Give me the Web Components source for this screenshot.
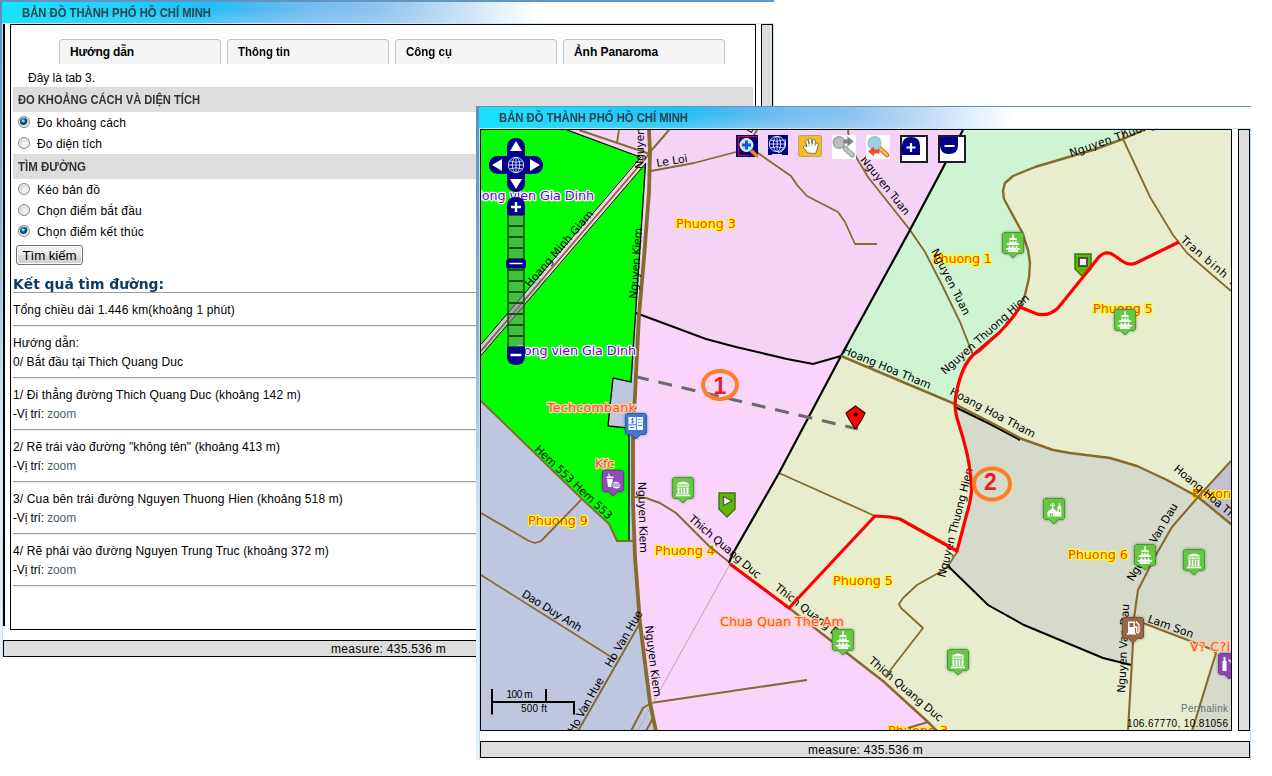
<!DOCTYPE html>
<html lang="vi">
<head>
<meta charset="utf-8">
<title>Bản đồ thành phố Hồ Chí Minh</title>
<style>
body{margin:0;background:#fff;font:12px/19px "Liberation Sans",Arial,sans-serif;color:#000}
</style>
</head>
<body>
<map-desktop></map-desktop>

<script>
function define(name, html, ready) {
  customElements.define(name, class extends HTMLElement {
    connectedCallback() {
      if (this.shadowRoot) return;
      const t = document.createElement('template');
      t.innerHTML = typeof html === 'function' ? html(this) : html;
      this.attachShadow({ mode: 'open' }).appendChild(t.content.cloneNode(true));
      if (ready) ready(this);
    }
  });
}

/* A single line of text fitted to an exact width (w, in px): small
   differences are tracked, larger ones condense the glyphs. */
define('fit-line', '<style>:host{display:inline-block;white-space:nowrap}span{display:inline-block;transform-origin:0 50%}</style><span><slot></slot></span>', el => {
  const w = +el.getAttribute('w'), span = el.shadowRoot.querySelector('span');
  const natural = span.getBoundingClientRect().width;
  if (natural > w * 1.035) {
    span.style.transform = `scaleX(${w / natural})`;
    el.style.width = w + 'px';
  } else span.style.letterSpacing = (w - natural) / el.textContent.length + 'px';
});

/* Browser window: title bar, content panel, side bar and status bar. */
define('app-window', `<style>
:host{display:block;position:relative;box-sizing:border-box;background:#fff}
.win{display:grid;grid-template-columns:var(--edge) 1fr 1px;grid-template-rows:var(--top) var(--head) 1px 1fr;height:100%}
.top{grid-column:1/4;background:#6396bf}
.left{grid-row:2/5;background:linear-gradient(#5b8fba,#8fb2cf 35%,#dce8ef 65%,#eee)}
.head{grid-column:2/4;background:
 radial-gradient(ellipse 260px 16px at 250px 24px,#ffffff40,#ffffff00) 0 0/533px 100% no-repeat,
 linear-gradient(100deg,#19e2fc,#22d2fa 18%,#1fc0f6 38%,#4bb9f1 47%,#6fbcef 56%,#8fc4ef 70%,#b9d9f5 82%,#e9f3fc 94%,#fff) 0 0/533px 100% no-repeat;
 display:flex;align-items:center;padding-left:20px;font-weight:bold;color:#29424d}
::slotted([slot=title]){margin-top:1px}
.seam{grid-column:2/4;background:#c9e6f3}
.main{grid-column:2;border-left:1px solid #b7e5fa;display:flex;flex-direction:column}
.rim{background:#b7dff3}
.row{display:flex;gap:var(--gap);height:var(--h)}
.edgebar{width:2px;margin-right:var(--lead);background:#000;height:calc(100% - 4px)}
:host([plain]) .edgebar{display:none}
.panel{box-sizing:border-box;width:var(--pw);border:1px solid #000;overflow:hidden}
.side{box-sizing:border-box;width:12px;border:1px solid #000;background:#ddd}
.status{box-sizing:border-box;margin-top:10px;height:17px;border:1px solid #000;background:#ddd;text-align:center;line-height:16px;padding-left:1px}
.wrap{display:flex}
</style>
<div class="win"><div class="top"></div><div class="left"></div>
<div class="head"><slot name="title"></slot></div><div class="seam"></div>
<div class="main"><div class="row"><div class="wrap"><div class="edgebar"></div><div class="panel"><slot></slot></div></div><div class="side"></div></div>
<div class="status"><slot name="status"></slot></div></div><div class="rim"></div></div>`);

define('tab-strip', `<style>:host{display:flex;gap:6px;padding:14px 0 0 46px}
::slotted(*){box-sizing:border-box;width:162px;height:25px;border:1px solid #c3c3c3;border-bottom:0;border-radius:4px 4px 0 0;background:#f5f5f5;padding-left:10px;font-weight:bold;line-height:24px}</style><slot></slot>`);

define('section-bar', `<style>:host{display:block;box-sizing:border-box;height:25px;line-height:25px;background:#ddd;padding:1px 0 0 5px;font-weight:bold;color:#333}</style><slot></slot>`);

define('radio-row', `<style>:host{display:flex;height:21px;line-height:23px;padding-left:5px}
i{box-sizing:border-box;width:12px;height:12px;margin:4px 7px 0 0;border:1px solid #85898c;border-radius:50%;background:radial-gradient(circle at 60% 60%,#f4f4f4 20%,#c9ccce 75%);box-shadow:inset 0 0 0 1px #f4f4f4}
:host([on]) i{background:radial-gradient(circle at 42% 38%,#9adcf4 0 8%,#1b6f9f 22%,#0b3350 42%,#cfd6da 54%,#e8e8e8 70%)}</style><i></i><slot></slot>`);

define('push-button', `<style>:host{box-sizing:border-box;display:flex;justify-content:center;width:67px;height:20px;margin:3px 0 9px 3px;border:1px solid #707070;border-radius:3px;background:linear-gradient(#f2f2f2,#ebebeb 50%,#ddd 50%,#cfcfcf);box-shadow:inset 0 0 0 1px #fcfcfc;font-size:13.3px;line-height:19px}</style><slot></slot>`);

define('route-step', `<style>:host{display:block;padding:7px 0 6px;border-bottom:1px solid #ececec;box-shadow:inset 0 -1px #9a9a9a}
::slotted(div){height:19px}</style><slot></slot>`);

define('guide-panel', `<style>
:host{display:block;padding:0 2px}
.note{height:23px;line-height:28px;padding-left:15px}
h3{margin:0;height:18px;border-bottom:1px solid #9a9a9a;font:bold 14.5px/20px "DejaVu Sans",Verdana,sans-serif;color:#0b3b68}
.first{padding-top:8px}
a{color:#4d6470}
</style>
<tab-strip><div><fit-line w="64">Hướng dẫn</fit-line></div><div><fit-line w="52">Thông tin</fit-line></div><div><fit-line w="46">Công cụ</fit-line></div><div><fit-line w="84">Ảnh Panaroma</fit-line></div></tab-strip>
<div class="note"><fit-line w="67">Đây là tab 3.</fit-line></div>
<section-bar><fit-line w="182">ĐO KHOẢNG CÁCH VÀ DIỆN TÍCH</fit-line></section-bar>
<radio-row on><fit-line w="89">Đo khoảng cách</fit-line></radio-row>
<radio-row><fit-line w="65">Đo diện tích</fit-line></radio-row>
<section-bar><fit-line w="68">TÌM ĐƯỜNG</fit-line></section-bar>
<radio-row><fit-line w="63">Kéo bản đồ</fit-line></radio-row>
<radio-row><fit-line w="105">Chọn điểm bắt đầu</fit-line></radio-row>
<radio-row on><fit-line w="107">Chọn điểm kết thúc</fit-line></radio-row>
<push-button><fit-line w="54">Tìm kiếm</fit-line></push-button>
<h3><fit-line w="151">Kết quả tìm đường:</fit-line></h3>
<div><route-step class="first"><div><fit-line w="222">Tổng chiều dài 1.446 km(khoảng 1 phút)</fit-line></div></route-step>
<route-step><div><fit-line w="66">Hướng dẫn:</fit-line></div><div><fit-line w="170">0/ Bắt đầu tại Thich Quang Duc</fit-line></div></route-step>
<route-step><div><fit-line w="288">1/ Đi thẳng đường Thich Quang Duc (khoảng 142 m)</fit-line></div><div><fit-line w="63">-Vị trí: <a>zoom</a></fit-line></div></route-step>
<route-step><div><fit-line w="267">2/ Rẽ trái vào đường "không tên" (khoảng 413 m)</fit-line></div><div><fit-line w="63">-Vị trí: <a>zoom</a></fit-line></div></route-step>
<route-step><div><fit-line w="330">3/ Cua bên trái đường Nguyen Thuong Hien (khoảng 518 m)</fit-line></div><div><fit-line w="63">-Vị trí: <a>zoom</a></fit-line></div></route-step>
<route-step><div><fit-line w="316">4/ Rẽ phải vào đường Nguyen Trung Truc (khoảng 372 m)</fit-line></div><div><fit-line w="63">-Vị trí: <a>zoom</a></fit-line></div></route-step></div>`);

/* ---- map drawing ---- */
const street = (s, x1, y1, x2, y2) => {
  const l = Math.hypot(x2 - x1, y2 - y1), a = Math.atan2(y2 - y1, x2 - x1) * 180 / Math.PI;
  return `<text class="st" textLength="${l.toFixed(1)}" transform="translate(${x1} ${y1}) rotate(${a.toFixed(2)})">${s}</text>`;
};
const place = (s, x, y, w, c) => `<text class="pl ${c || 'ward'}" x="${x}" y="${y}" textLength="${w}">${s}</text>`;
const road = (w, p) => `<polyline class="rd" stroke-width="${w}" points="${p}"/>`;
const area = (c, p) => `<polygon fill="${c}" points="${p}"/>`;
const glyphs = {
  pagoda: '<path d="M11 2v3" stroke="#fff" stroke-width="1.300"/><path d="M11 4Q11.500 6 15 6.500L14.500 8H7.500L7 6.500Q10.500 6 11 4ZM7.500 8.800h1.300v1.700h1.500V8.800h1.400v1.700h1.500V8.800h1.300v1.700Q15 11.500 17.500 11.500L16.500 13H5.500L4.500 11.500Q7 11.500 7.500 10.500ZM6.800 13.800h1.400v1.600h2V13.800h1.600v1.600h2V13.800h1.400v1.500Q16 16.300 18.500 16.300L17.500 17.800H4.500L3.500 16.300Q6 16.300 6.800 15.300ZM6 18.200h3v-.2h4v.2h3v1.800H6Z" fill="#fff"/>',
  museum: '<path d="M4 7.500Q11 1.500 18 7.500ZM5 8.500h12v1.300H5ZM5.500 10.500h2v6.500h-2ZM8.700 10.500h1.700v6.500H8.700ZM11.600 10.500h1.700v6.500h-1.700ZM14.500 10.500h2v6.500h-2ZM4 17.500h14v1.700H4Z" fill="#fff"/>',
  church: '<path d="M9 5h1.200v1.700h1.600v1.200h-1.600v2.300L14.500 14V9.500l.8-1.500L16.500 4l1 4 .8 1.500V18.500H4.500V14L9 10.200V7.900H7.400V6.700H9Z" fill="#fff"/><path d="M7.500 18.500v-3h1.800v3M16.500 11v3" stroke="#68c344" fill="none"/>',
  bank: '<path d="M3.500 4H18V17H3.500Z" fill="#fff"/><path d="M11.300 4v13M13 6.500h1.600M15.600 6.500h1.400M13 9.500h1.600M15.600 9.500h1.400M13 12.500h4M3.500 11.800h8M5 14.500h4.500" stroke="#3d79d4"/><path d="M9 5.700H7Q5.500 6.700 7.500 7.700Q9.500 8.500 8.500 9.500H6M7.600 4.700v6" fill="none" stroke="#3d79d4" stroke-width=".9"/>',
  food: '<path d="M4.500 6.500h7v1.500h-7ZM5 8.800h5.800L10.500 12.500Q8.700 14 9.500 17H6ZM6.800 6.500L6 3.500l1-.3 1 3.300ZM10.500 13.500q3.500-3.500 7.500 0ZM10 14.500h8.500v1H10ZM10.500 16.500h8q-1 2-4 2t-4-2Z" fill="#fff"/>',
  fuel: '<path d="M6 4.500h7V16h1v1.500H5V16h1ZM7.500 6V10h4V6Z" fill="#fff" fill-rule="evenodd"/><path d="M13 10h1.700v5q1.500 2 2.300-.5V8l-3-3.500" fill="none" stroke="#fff" stroke-width="1.300"/>',
  bar: '<path d="M4.500 8h4v10h-4ZM5.500 4h2v4h-2ZM11 6l5 5v7h-1v-6l-5-5Z" fill="#fff"/>'
};
/* Square pin whose badge centre is (cx, cy). */
const pin = (g, cx, cy, c = '#67c646', d = '#469b32') => `<g class="pin" transform="translate(${cx - 11} ${cy - 11})"><path d="M2 .5H20L21.500 2V20L20 21.500H15.500L11 26L6.500 21.500H2L.5 20V2Z" fill="${c}" stroke="${d}"/>${glyphs[g]}</g>`;
const globe = (x, y) => `<g transform="translate(${x} ${y})" fill="none" stroke="#dce6ff" stroke-width=".9"><circle r="7.700"/><ellipse rx="3.700" ry="7.700"/><path d="M0-7.700V7.700M-7.700 0H7.700M-6.500-4Q0-1.500 6.500-4M-6.500 4Q0 1.500 6.500 4"/></g>`;

const hienNorth = '1144,130 1123,139 1093,150 1062,159 1035,167 1013,176 1005,183 1003,191 1004,199 1022,232 1028,250 1030,263 1029,278 1025,295 1020,307';
const hienMid = '1020,307 1012,319 1000,332 980,351 973,355 965,365 961,375 957,390 955,406';
const tham = '955,404 990,422 1022,439 1053,450 1070,453 1110,458 1137,466 1167,480 1198,497 1232,525';
const duc = '729,563 789,608 870,671 883,681 928,722 937,731';
const kiem = '649,129 650,153 649,192 644,258 639,315 636,375 633,437 633,503 635,557 640,623 650,703 656,731';
const wardLine = '963,130 910,230 841,356 779,473 732,555 729,563';

define('map-view', `<style>
:host{display:block;width:750px;height:600px}
svg{display:block}
.rd{fill:none;stroke:#876a2d;stroke-linejoin:round}
.bk{fill:none;stroke:#000}
.st{font:11px "DejaVu Sans",sans-serif;fill:#000}
.pl{font:12.800px "DejaVu Sans",sans-serif;paint-order:stroke;stroke-width:2.500px;stroke-linejoin:round}
.ward{fill:#ff3d30;stroke:#ff0}
.poi{fill:#ff4a40;stroke:#fdd5a0}
.park{fill:#6a00d8;stroke:#fff}
.pin{filter:drop-shadow(0 0 1.500px #0006)}
.sm{font:10px "Liberation Sans",Arial,sans-serif}
.num{font:bold 23px "Liberation Sans",Arial,sans-serif;fill:#ed1c24}
</style>
<svg width="750" height="600" viewBox="481 130 750 600">
<defs><clipPath id="hm"><path d="M481 130H700V278H481Z"/></clipPath></defs>
${area('#fad4fb', '481,130 1231,130 1231,730 481,730')}
${area('#f5d3f6', '481,130 963,130 841,356 813,364 787,359 736,347 706,339 637,314 481,314')}
${area('#bfc6df', '481,314 639,314 636,375 633,437 633,503 635,557 640,623 650,703 656,730 481,730')}
${area('#e8eecd', '963,130 1231,130 1231,730 937,730 870,671 789,608 729,563 732,555 841,356')}
${area('#cff4d2', '963,130 ' + hienNorth + ' 1000,332 980,351 973,355 965,365 957,390 955,404 841,356')}
${area('#d6dacb', '955,406 ' + tham + ' 1231,730 1192,730 1216,653 1211,649 1143,623 1133,643 1131,665 1103,658 1024,625 987,604 948,566 957,552 967,513 971,493 970,470 963,438 957,418')}
${area('#c3c1cd', '1198,497 1231,461 1231,524')}
${area('#0f0', '481,130 567,130 640,157 646,163 642,225 635,314 631,382 613,378 608,426 629,428 629,540 617,541 609,524 582,499 481,401')}
<path class="bk" stroke-width="1.300" d="M567 130L640 157M645.500 163L641.500 225L635.500 314L631 382L613 378L608 426L629 428V540"/>
<path d="M642 155L481 344V356L646 163Z" fill="#c5cbd8"/><path clip-path="url(#hm)" d="M642 155L481 344V356L646 163Z" fill="#f3d3ec"/>
<path class="bk" stroke-width="1" d="M641 157L481 344.500M481 355.500L646 163"/>
${place('Phuong 3', 676, 228, 60)}${place('Phuong 1', 933, 263, 59)}${place('Phuong 5', 1093, 313, 60)}${place('Phuong 9', 528, 525, 60)}
${place('Phuong 4', 655, 555, 60)}${place('Phuong 5', 833, 585, 60)}${place('Phuong 6', 1068, 559, 60)}${place('Phuong', 1192, 498, 47)}${place('Phuong 3', 888, 735, 60)}
${road(1.8, '481,351 650,153')}
${road(2, '579,130 650,154')}${road(1.8, '619,130 617,143')}${road(2, '669,130 650,152')}
${road(1.8, '651,171 694,163 736,152 745,147 749,147 758,153 791,176 797,185 807,196 838,212 845,222 855,244 877,244')}${road(2, '757,130 747,147')}
${road(1.9, '848,130 849,140 856,157 868,177 910,230 925,252 943,287 960,322 973,355')}
${road(2, '481,401 582,499 609,524 617,541 633,541')}
${road(1.8, '481,513 529,541 535,543 541,541 582,499')}
${road(1.8, '481,575 616,660')}${road(2, '640,623 578,731')}
${road(2, '631,731 643,708 651,703 807,680')}${road(2, '646,731 653,718')}
<path d="M729 566L638 730" stroke="#c3a3ae" fill="none"/>
${road(2, '635,497 646,498 660,503 676,513 709,546 729,562')}
${road(1.8, '779,473 875,516')}
<polyline class="bk" stroke-width="2.200" points="${wardLine}"/>
<path class="bk" stroke-width="2" d="M636 313L706 339L736 347L787 359L813 364L841 356M955 407L990 424L1020 440M948 566L988 605L1024 625L1103 658L1131 665"/>
${road(2.5, '841,356 955,404')}${road(2.4, tham)}${road(2.4, hienNorth)}${road(2.4, hienMid)}${road(2.5, duc)}
${road(1.8, '957,552 948,566 940,572 917,585 903,598 899,604 901,608 923,628 885,677')}${road(2, '908,728 928,722')}
${road(1.8, '1125,130 1123,139 1150,197 1173,235 1187,253 1210,273 1231,291')}
${road(2.1, '1231,461 1198,497 1172,527 1157,553 1138,590 1134,618 1133,643 1128,731')}
${road(2.1, '1132,619 1143,623 1211,649')}${road(2.1, '1211,649 1216,653 1192,731')}
${road(3.8, kiem)}
${street('Nguyen Kiem', 643, 169, 645, 98)}${street('Nguyen Kiem', 637, 299, 642, 228)}
${street('Nguyen Kiem', 638, 482, 640, 553)}${street('Nguyen Kiem', 645, 626, 654, 697)}
${street('Le Loi', 657, 167, 688, 162)}${street('Le Loi', 751, 134, 767, 106)}${street('Hoang Minh Giam', 530, 288, 594, 214)}
${street('Hem 553 Hem 553', 534, 450, 608, 520)}${street('Dao Duy Anh', 521, 596, 579, 632)}
${street('Ho Van Hue', 611, 668, 643, 613)}${street('Ho Van Hue', 574, 734, 604, 680)}
${street('Thich Quang Duc', 688, 520, 757, 579)}${street('Thich Quang Duc', 774, 589, 846, 645)}${street('Thich Quang Duc', 868, 662, 939, 722)}
${street('Nguyen Tuan', 860, 160, 905, 216)}${street('Nguyen Tuan', 931, 251, 964, 316)}
${street('Hoang Hoa Tham', 842, 353, 929, 389)}${street('Hoang Hoa Tham', 949, 394, 1033, 438)}${street('Hoang Hoa Tham', 1173, 470, 1245, 530)}
${street('Nguyen Thuong Hien', 945, 375, 1030, 299)}${street('Nguyen Thuong Hien', 1071, 157, 1185, 117)}${street('Nguyen Thuong Hien', 945, 578, 973, 469)}
${street('Tran binh Trong', 1180, 241, 1253, 304)}
${street('Nguyen Van Dau', 1133, 582, 1178, 506)}${street('Nguyen Van Dau', 1125, 693, 1129, 604)}${street('Lam Son', 1147, 622, 1192, 638)}
${place('Cong vien Gia Dinh', 473, 200, 121, 'park')}${place('Cong vien Gia Dinh', 515, 355, 121, 'park')}
${place('Techcombank', 547, 412, 89, 'poi')}${place('Kfc', 595, 468, 19, 'poi')}${place('Chua Quan The Am', 720, 626, 124, 'poi')}${place('V? C?i', 1190, 651, 40, 'poi')}
${pin('pagoda', 1013, 243)}${pin('pagoda', 1125, 320)}${pin('pagoda', 843, 640)}${pin('pagoda', 1145, 555)}
${pin('museum', 683, 488)}${pin('museum', 1194, 560)}${pin('museum', 958, 660)}${pin('church', 1054, 509)}
${pin('bank', 636, 424, '#3d79d4', '#2a5dac')}${pin('food', 613, 481, '#8b4fb8', '#70389c')}${pin('fuel', 1133, 628, '#9b6647', '#7b4d33')}${pin('bar', 1229, 664, '#8b45b5', '#70389c')}
<path d="M1075 254H1091V269L1083 277L1075 269Z" fill="#62b800" stroke="#387519" stroke-width="1.500"/><rect x="1079" y="258" width="8" height="8" fill="#f4eef4" stroke="#444" stroke-width="1.800"/>
<path d="M719 493H735V509L727 517L719 509Z" fill="#62b800" stroke="#387519" stroke-width="1.500"/><path d="M723.500 496.500L732 501L723.500 505.500Z" fill="#f6f6f6" stroke="#555" stroke-width="1.300"/>
<path d="M635 376.500L858 429" stroke="#6b6b6b" stroke-width="3" stroke-dasharray="14 10" fill="none"/>
<path d="M855.500 406L865 413L861.500 420L856 428.500H855L849.500 420L846 413Z" fill="red" stroke="#300" stroke-width="1.200"/><circle cx="855.500" cy="414.500" r="2" fill="#200"/>
<path d="M730 564L789 608L875 516L890 517L900 519L957 551L967 513Q971 500 971.500 490Q971 465 963 438L957 418Q953 404 957 390Q962 366 973 355L1000 332Q1013 318 1020 307L1032 312Q1046 319 1058 308L1083 277L1098 258Q1106 249 1115 256L1122 261Q1129 266 1136 263L1179 242" fill="none" stroke="red" stroke-width="3.200" stroke-linejoin="round"/>
<ellipse cx="720" cy="385" rx="17" ry="14" fill="none" stroke="#ff7f27" stroke-width="4"/><text class="num" x="713.500" y="394">1</text>
<ellipse cx="992" cy="484" rx="18" ry="15.500" fill="none" stroke="#ff7f27" stroke-width="4"/><text class="num" x="984" y="490">2</text>
<g fill="#00008b"><rect x="507" y="138" width="18" height="54" rx="8.500"/><rect x="489" y="156" width="54" height="18" rx="8.500"/></g>
<path d="M516 141L522 151H510ZM516 189L522 179H510ZM492 165L502 159V171ZM540 165L530 159V171Z" fill="#fff"/>${globe(516, 165)}
<rect x="508" y="215" width="16" height="132" fill="#7f7f7f" fill-opacity=".5" stroke="#064d06" stroke-width="1.500"/>
<path d="M508 226h16m-16 11h16m-16 11h16m-16 11h16m-16 11h16m-16 11h16m-16 11h16m-16 11h16m-16 11h16m-16 11h16m-16 11h16" stroke="#0a5a0a" stroke-width="1.800"/>
<path d="M507 215V206Q507 197 516 197T525 206V215ZM507 347V356Q507 365 516 365T525 356V347Z" fill="#00008b"/><rect x="506" y="259" width="20" height="9.500" rx="3" fill="#00008b"/>
<path d="M511 207h10M516 202v10M510.500 355h11" stroke="#fff" stroke-width="2.400"/><path d="M509.500 263.500h13" stroke="#fff" stroke-width="1.500"/>
<rect x="736" y="135" width="22" height="22" fill="#00008b"/><path d="M738.500 156V136.500H757" stroke="red" fill="none" stroke-width="1.200"/><path d="M738.500 155.500H749" stroke="red"/><path d="M751 150.500L758 157" stroke="#f48a1c" stroke-width="3.500"/><circle cx="746.500" cy="145" r="6.500" fill="#bdeaf5" stroke="#e8fbff"/><path d="M742 145h9M746.500 140.500v9" stroke="#1b57d8" stroke-width="3"/>
<rect x="768" y="135" width="20" height="20" fill="#00008b"/>${globe(777, 144)}<path d="M785 139Q788 150 778 153M772 154.500h10" stroke="#dce6ff" fill="none"/>
<rect x="798.500" y="135.500" width="23" height="21" rx="2" fill="#f2be22" stroke="#b9a070"/><path d="M808 153L803 147Q804 144.500 807 147L805.500 141Q806.500 138.500 808.500 141L809 144L808.700 139Q810 137 811.500 139L812 144L812.700 140Q814.500 138 815.300 140.500V144.500Q817.500 141.500 818.500 143.500L817 150L815.500 153.500Z" fill="#fff" stroke="#655" stroke-width=".8"/><path d="M809 144v2.500M812 144v2.500M815 144.500v2" stroke="#777" stroke-width=".6"/>
<rect x="832" y="135" width="24" height="24" fill="#fff"/><path d="M845 148.500L852.500 155" stroke="#999" stroke-width="5" stroke-linecap="round"/><path d="M845 148.500L852.500 155" stroke="#c6c6c6" stroke-width="3" stroke-linecap="round"/><circle cx="839" cy="142.500" r="5.800" fill="#bcbcbc" stroke="#9c9c9c" stroke-width="1.300"/><path d="M843 139.500h4.500v-3l6 5-6 5v-3H843Z" fill="#7f7f7f" stroke="#b5b5b5" stroke-width=".7"/>
<rect x="866" y="135" width="24" height="24" fill="#fff"/><path d="M880 148.500L887 155" stroke="#d9762a" stroke-width="5" stroke-linecap="round"/><path d="M880 148.500L887 155" stroke="#f5b26b" stroke-width="2.500" stroke-linecap="round"/><circle cx="874.500" cy="143" r="6.300" fill="#9dd2ef" stroke="#a5bdcc" stroke-width="1.500"/><path d="M868 151.500L874 146.500V149.500H879.500V153.500H874V156.500Z" fill="#f6492e"/>
<g stroke="#1c1c24" stroke-width="2" fill="#fff"><rect x="901" y="136" width="26" height="26"/><rect x="939" y="136" width="26" height="26"/></g><path d="M902 155V146Q902 137 911 137T920 146V155ZM940 137H958V145Q958 154 949 154T940 145Z" fill="#00008b"/><path d="M906.500 147.500h9M911 143v9M944.500 146h10" stroke="#fff" stroke-width="2.200"/>
<path d="M492 689V714.500M491 702H575M546 689V702M574 702V714.500" stroke="#000" stroke-width="2" fill="none"/>
<text class="sm" x="506.500" y="698" textLength="26">100 m</text><text class="sm" x="521" y="712" textLength="26">500 ft</text>
<text class="sm" x="1181" y="712" textLength="47" fill="#60717b">Permalink</text><text class="sm" x="1127" y="727" textLength="101">106.67770, 10.81056</text>
</svg>`);

define('map-desktop', `<style>
:host{display:block;position:relative;width:1272px;height:776px;overflow:hidden}
app-window{position:absolute}
.a{left:0;top:0;width:774px;height:659px;--edge:2px;--top:2px;--head:21px;--gap:5px;--h:606px;--lead:5px;--pw:746px}
.b{left:476px;top:106px;width:775px;height:654px;--edge:3px;--top:1px;--head:21px;--gap:6px;--h:602px;--lead:0px;--pw:752px}
</style>
<app-window class="a"><fit-line slot="title" w="189">BẢN ĐỒ THÀNH PHỐ HỒ CHÍ MINH</fit-line><guide-panel></guide-panel><fit-line slot="status" w="115">measure: 435.536 m</fit-line></app-window>
<app-window class="b" plain><fit-line slot="title" w="189">BẢN ĐỒ THÀNH PHỐ HỒ CHÍ MINH</fit-line><map-view></map-view><fit-line slot="status" w="115">measure: 435.536 m</fit-line></app-window>`);
</script>
</body>
</html>
